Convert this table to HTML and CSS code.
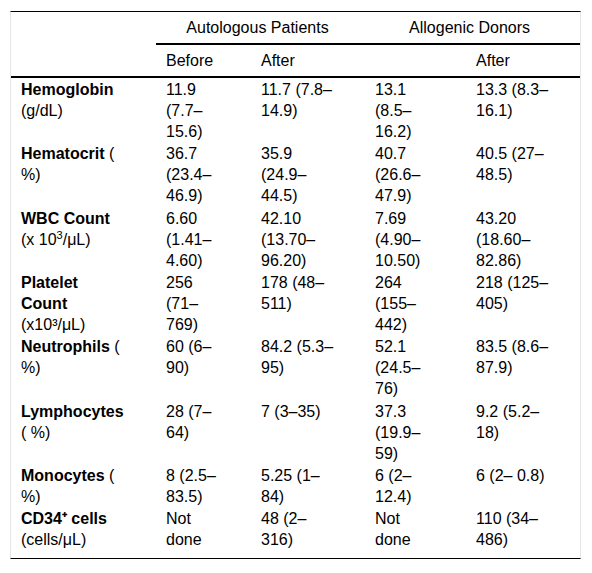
FILE: index.html
```html
<!DOCTYPE HTML><html>
  <head>
    <title>Blood counts</title>
    <meta name="viewport" content="width=device-width, initial-scale=1">
    <link rel="stylesheet" href="styles.css">
  </head>
  <body>
    <div class="table-wrap">
      <table class="counts">
        <colgroup>
          <col class="col-label">
          <col class="col-before">
          <col class="col-after">
          <col class="col-donor">
          <col class="col-donor-after">
        </colgroup>
        <thead>
          <tr class="group-row">
            <th class="blank"></th>
            <th colspan="2" class="group">Autologous Patients</th>
            <th colspan="2" class="group">Allogenic Donors</th>
          </tr>
          <tr class="sub-row">
            <th></th>
            <th>Before</th>
            <th>After</th>
            <th></th>
            <th>After</th>
          </tr>
        </thead>
        <tbody>
          <tr>
            <td><b>Hemoglobin</b> <span class="unit">(g/dL)</span></td>
            <td>11.9 (7.7–15.6)</td>
            <td>11.7 (7.8–14.9)</td>
            <td>13.1 (8.5–16.2)</td>
            <td>13.3 (8.3–16.1)</td>
          </tr>
          <tr>
            <td><b>Hematocrit</b> ( %)</td>
            <td>36.7 (23.4–46.9)</td>
            <td>35.9 (24.9–44.5)</td>
            <td>40.7 (26.6–47.9)</td>
            <td>40.5 (27–48.5)</td>
          </tr>
          <tr>
            <td><b>WBC Count</b> <span class="unit">(x 10<sup>3</sup>/μL)</span></td>
            <td>6.60 (1.41–4.60)</td>
            <td>42.10 (13.70–96.20)</td>
            <td>7.69 (4.90–10.50)</td>
            <td>43.20 (18.60–82.86)</td>
          </tr>
          <tr>
            <td><b>Platelet Count</b> <span class="unit">(x10³/μL)</span></td>
            <td>256 (71–769)</td>
            <td>178 (48–511)</td>
            <td>264 (155–442)</td>
            <td>218 (125–405)</td>
          </tr>
          <tr>
            <td><b>Neutrophils</b> ( %)</td>
            <td>60 (6–90)</td>
            <td>84.2 (5.3–95)</td>
            <td>52.1 (24.5–76)</td>
            <td>83.5 (8.6–87.9)</td>
          </tr>
          <tr>
            <td><b>Lymphocytes</b> ( %)</td>
            <td>28 (7–64)</td>
            <td>7 (3–35)</td>
            <td>37.3 (19.9–59)</td>
            <td>9.2 (5.2–18)</td>
          </tr>
          <tr>
            <td><b>Monocytes</b> ( %)</td>
            <td>8 (2.5–83.5)</td>
            <td>5.25 (1–84)</td>
            <td>6 (2–12.4)</td>
            <td>6 (2– 0.8)</td>
          </tr>
          <tr class="last-row">
            <td><b>CD34⁺ cells</b> <span class="unit">(cells/μL)</span></td>
            <td>Not done</td>
            <td>48 (2–316)</td>
            <td>Not done</td>
            <td>110 (34–486)</td>
          </tr>
        </tbody>
      </table>
    </div>
  </body>
</html>
```
FILE: styles.css
```css
html {font-family: "Liberation Sans", Arial, sans-serif; font-size: 16px; color: #000;}
body {margin: 0; background-color: #fff;}
.table-wrap {padding: 11px 10px 0 10px;}
.counts {table-layout: fixed; width: 571px; border-collapse: separate; border-spacing: 0; border-top: 1px solid #000; border-bottom: 1px solid #000; border-left: 1px solid #e6e6e6; border-right: 1px solid #e6e6e6;}
.col-label {width: 145px;}
.col-before {width: 95px;}
.col-after {width: 114px;}
.col-donor {width: 101px;}
.col-donor-after {width: 114px;}
.counts th, .counts td {line-height: 21px; padding: 1px 30px 0.33px 10px; text-align: left; vertical-align: top; font-weight: normal;}
.counts th {padding-top: 5px; padding-bottom: 5px;}
.group-row .group {text-align: center; padding-right: 16px; border-bottom: 2px solid #000;}
.sub-row th {border-bottom: 2px solid #000;}
.counts td b {font-weight: bold;}
.counts .unit {white-space: nowrap;}
.counts sup {font-size: 11px; line-height: 0;}
.last-row td {padding-bottom: 8px;}
```
